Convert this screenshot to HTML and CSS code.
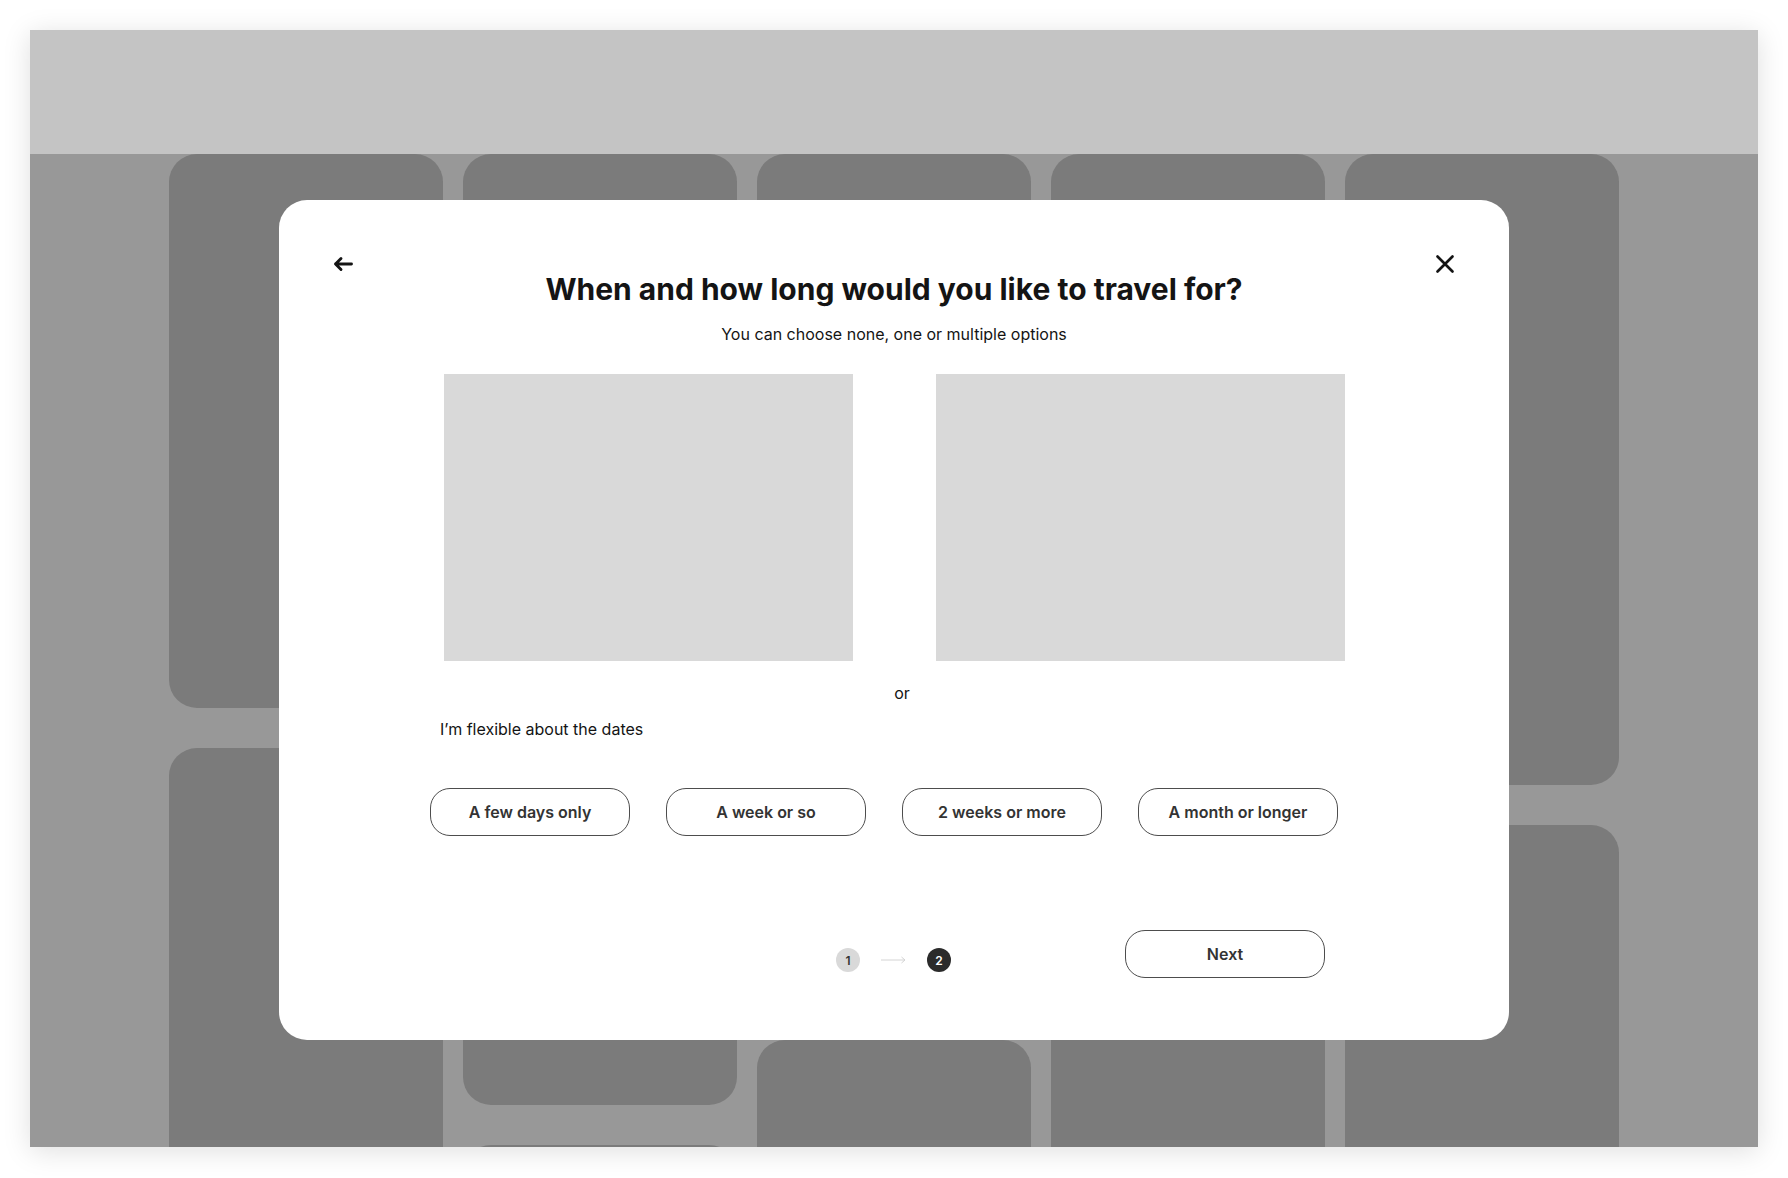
FILE: index.html
```html
<!DOCTYPE html>
<html lang="en">
<head>
<meta charset="utf-8">
<title>Travel dates</title>
<link rel="stylesheet" href="styles.css">
</head>
<body>
<div class="page">
  <div class="frame">
    <div class="topbar"></div>
    <div class="grid">
      <div class="col">
        <div class="card h554"></div>
        <div class="card h500"></div>
      </div>
      <div class="col">
        <div class="card h446"></div>
        <div class="card h465"></div>
        <div class="card h300"></div>
      </div>
      <div class="col">
        <div class="card h846"></div>
        <div class="card h300"></div>
      </div>
      <div class="col">
        <div class="card h1246"></div>
      </div>
      <div class="col">
        <div class="card h631"></div>
        <div class="card h400"></div>
      </div>
    </div>

    <div class="modal">
      <div class="modal-head">
        <button class="icon-btn" aria-label="Back">
          <svg width="20" height="20" viewBox="0 0 20 20"><path d="M2.5 10H18.5M8 4.5L2.5 10L8 15.5" fill="none" stroke="#141414" stroke-width="2.9" stroke-linecap="round" stroke-linejoin="round"/></svg>
        </button>
        <div class="heading">
          <h1 class="title">When and how long would you like to travel for?</h1>
          <p class="subtitle">You can choose none, one or multiple options</p>
        </div>
        <button class="icon-btn" aria-label="Close">
          <svg width="20" height="20" viewBox="0 0 20 20"><path d="M2.5 2.5L17.5 17.5M17.5 2.5L2.5 17.5" fill="none" stroke="#141414" stroke-width="2.7" stroke-linecap="round"/></svg>
        </button>
      </div>

      <div class="pickers">
        <div class="picker"></div>
        <div class="picker"></div>
      </div>

      <div class="or">or</div>
      <div class="flex-label">I’m flexible about the dates</div>

      <div class="chips">
        <button class="chip">A few days only</button>
        <button class="chip">A week or so</button>
        <button class="chip">2 weeks or more</button>
        <button class="chip">A month or longer</button>
      </div>

      <div class="footer">
        <div class="steps">
          <span class="step step-done">1</span>
          <svg class="step-arrow" width="25" height="10" viewBox="0 0 25 10"><path d="M0 5H24M20.5 2L24 5L20.5 8" fill="none" stroke="#d4d4d4" stroke-width="1"/></svg>
          <span class="step step-current">2</span>
        </div>
        <button class="next-btn">Next</button>
      </div>
    </div>
  </div>
</div>
</body>
</html>
```

FILE: styles.css
```css
* {
  box-sizing: border-box;
}

html, body {
  margin: 0;
  padding: 0;
  background: #ffffff;
}

body {
  font-family: Inter, "Noto Sans", "Liberation Sans", sans-serif;
  color: #141414;
}

.page {
  padding: 30px;
}

.frame {
  position: relative;
  width: 1728px;
  height: 1117px;
  background: #989898;
  overflow: hidden;
  box-shadow: 0 4px 26px rgba(0, 0, 0, 0.13);
}

.topbar {
  height: 124px;
  background: #c4c4c4;
}

.grid {
  display: flex;
  gap: 20px;
  padding: 0 139px;
}

.col {
  width: 274px;
  display: flex;
  flex-direction: column;
  gap: 40px;
  flex: none;
}

.card {
  background: #7b7b7b;
  border-radius: 28px;
  flex: none;
}

.h300 { height: 300px; }
.h400 { height: 400px; }
.h446 { height: 446px; }
.h465 { height: 465px; }
.h500 { height: 500px; }
.h554 { height: 554px; }
.h631 { height: 631px; }
.h846 { height: 846px; }
.h1246 { height: 1246px; }

.modal {
  position: absolute;
  left: 249px;
  top: 170px;
  width: 1230px;
  height: 840px;
  background: #ffffff;
  border-radius: 28px;
  padding: 54px 54px 0;
  display: flex;
  flex-direction: column;
  align-items: flex-start;
}

.modal-head {
  width: 100%;
  display: grid;
  grid-template-columns: 20px 1fr 20px;
  align-items: start;
}

.icon-btn {
  width: 20px;
  height: 20px;
  padding: 0;
  border: 0;
  background: none;
  display: block;
  cursor: pointer;
}

.icon-btn svg {
  display: block;
}

.heading {
  text-align: center;
}

.title {
  margin: 15px 0 0;
  font-size: 30px;
  line-height: 40px;
  font-weight: 700;
  color: #141414;
  letter-spacing: 0;
}

.subtitle {
  margin: 13px 0 0;
  font-size: 16px;
  line-height: 24px;
  font-weight: 400;
  color: #141414;
}

.pickers {
  margin: 28px 0 0 111px;
  display: flex;
  gap: 83px;
}

.picker {
  width: 409px;
  height: 287px;
  background: #d9d9d9;
}

.or {
  width: 100%;
  margin-top: 20px;
  padding-left: 16px;
  text-align: center;
  font-size: 16px;
  line-height: 24px;
  color: #141414;
}

.flex-label {
  margin: 12px 0 0 107px;
  font-size: 16px;
  line-height: 24px;
  color: #141414;
}

.chips {
  margin: 47px 0 0 97px;
  display: flex;
  gap: 36px;
}

.chip,
.next-btn {
  width: 200px;
  height: 48px;
  border: 1px solid #4d4d4d;
  border-radius: 20px;
  background: #ffffff;
  font-family: inherit;
  font-size: 16px;
  font-weight: 600;
  color: #333333;
  padding: 0;
  cursor: pointer;
}

.footer {
  margin-top: 94px;
  display: flex;
  align-items: flex-start;
}

.steps {
  margin: 18px 0 0 503px;
  display: flex;
  align-items: center;
}

.step {
  width: 24px;
  height: 24px;
  border-radius: 50%;
  display: flex;
  align-items: center;
  justify-content: center;
  font-size: 12px;
  font-weight: 600;
}

.step-done {
  background: #d9d9d9;
  color: #333333;
}

.step-current {
  background: #2b2b2b;
  color: #ffffff;
}

.step-arrow {
  display: block;
  margin: 0 21px;
}

.next-btn {
  margin-left: 174px;
}
```
